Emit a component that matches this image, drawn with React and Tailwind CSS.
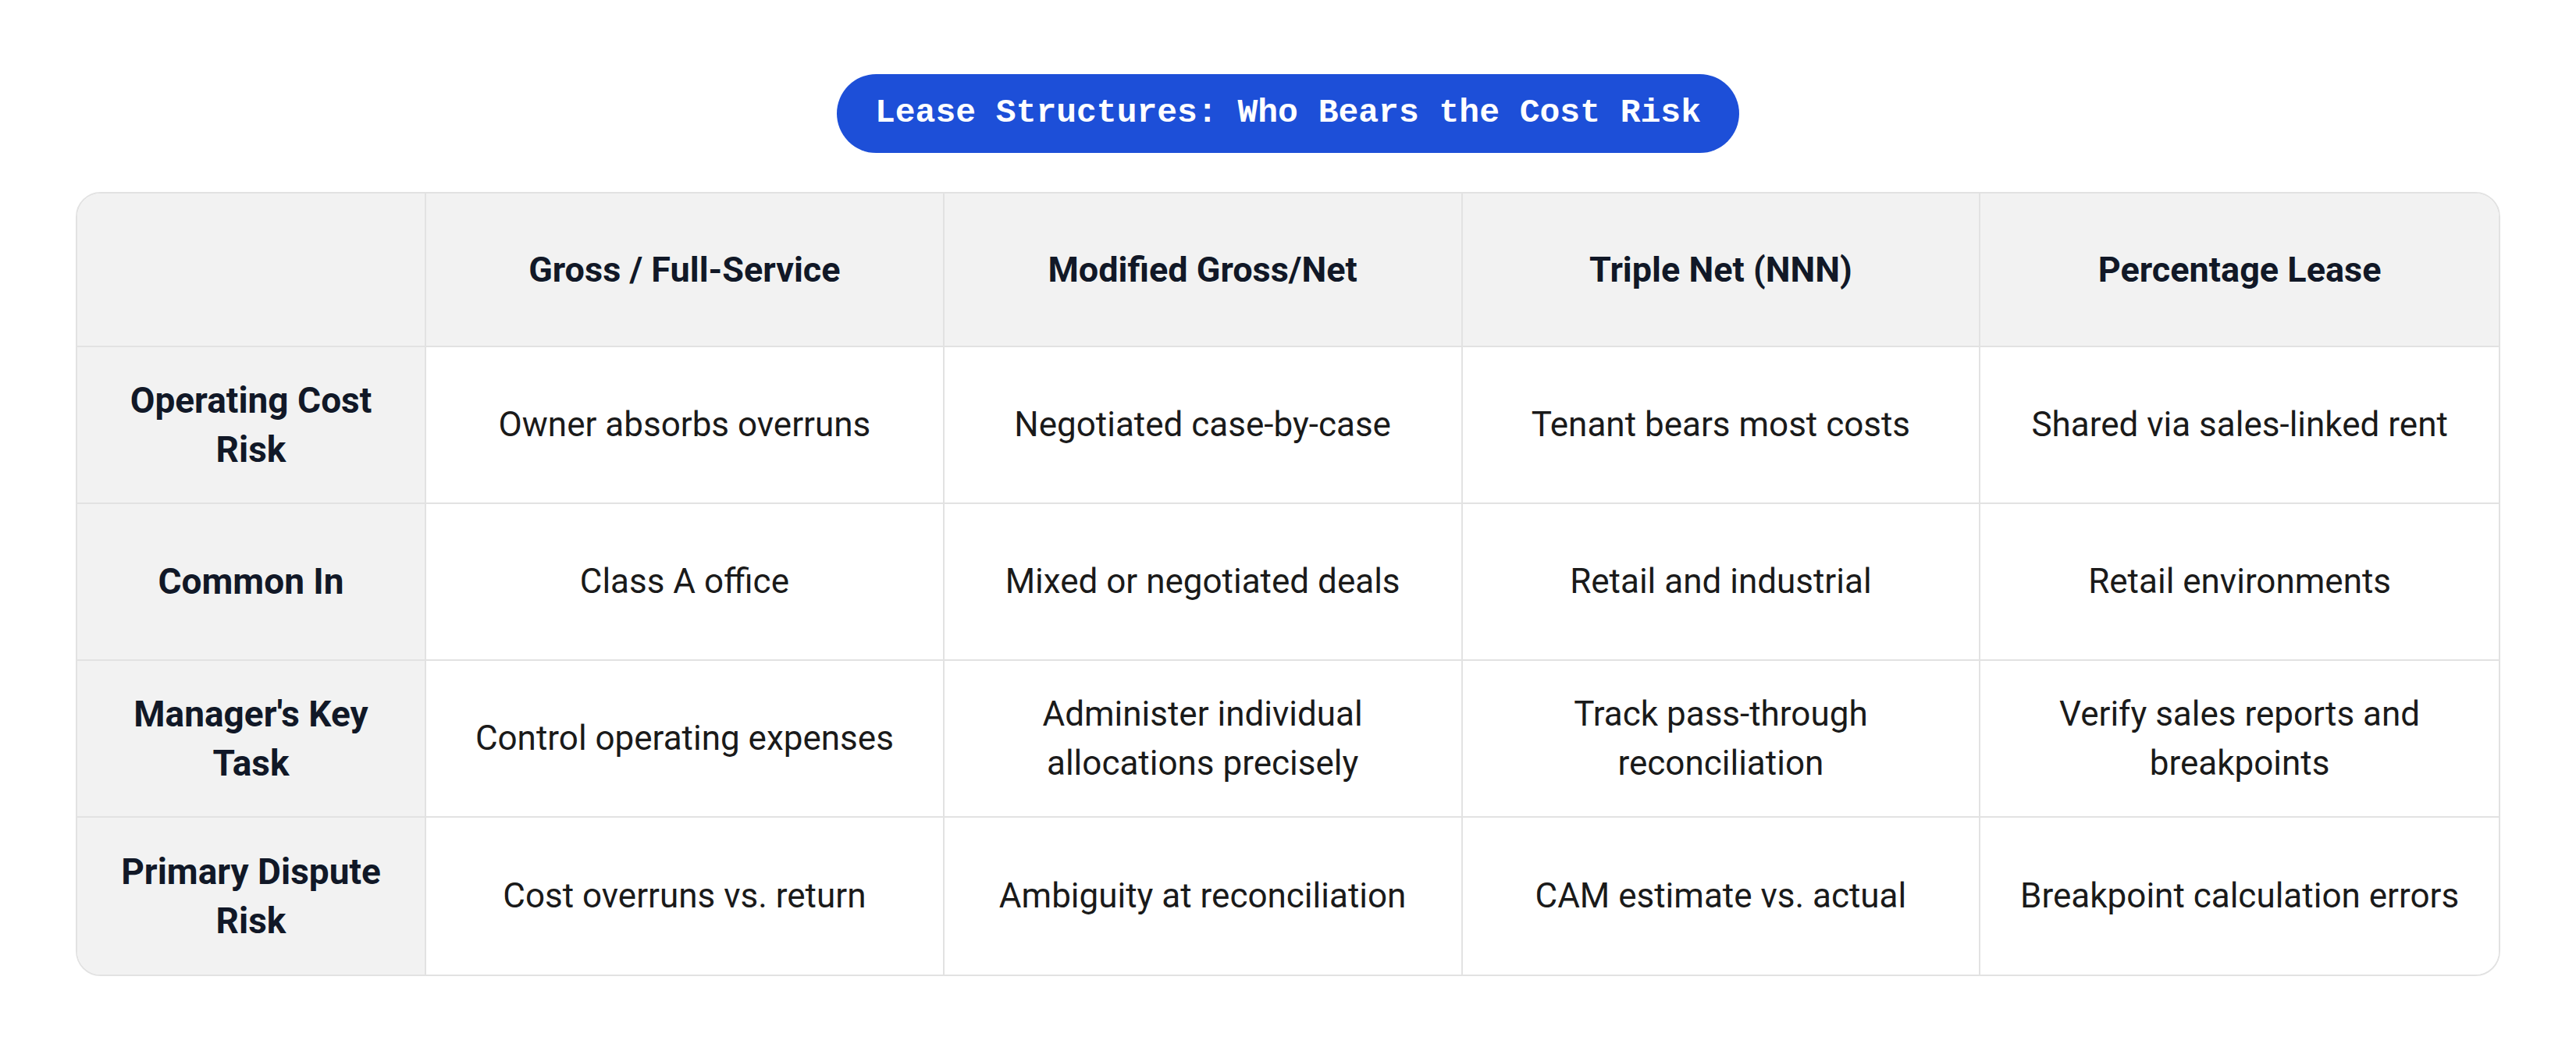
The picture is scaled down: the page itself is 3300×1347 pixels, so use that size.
import React from "react";

const headers = ["Gross / Full-Service", "Modified Gross/Net", "Triple Net (NNN)", "Percentage Lease"];
const rows = [
  ["Operating Cost Risk", ["Owner absorbs overruns", "Negotiated case-by-case", "Tenant bears most costs", "Shared via sales-linked rent"]],
  ["Common In", ["Class A office", "Mixed or negotiated deals", "Retail and industrial", "Retail environments"]],
  ["Manager's Key Task", ["Control operating expenses", "Administer individual allocations precisely", "Track pass-through reconciliation", "Verify sales reports and breakpoints"]],
  ["Primary Dispute Risk", ["Cost overruns vs. return", "Ambiguity at reconciliation", "CAM estimate vs. actual", "Breakpoint calculation errors"]],
];

export default function App() {
  return (
    <div className="w-[3300px] h-[1347px] bg-white flex flex-col items-center pt-[95px] px-[97px]" style={{ fontFamily: "Roboto, 'Liberation Sans', sans-serif" }}>
      <div className="h-[101px] px-[49px] rounded-full bg-[#1d4fd8] flex items-center text-white font-bold text-[43px] whitespace-nowrap" style={{ fontFamily: "'Liberation Mono', 'DejaVu Sans Mono', monospace" }}>
        Lease Structures: Who Bears the Cost Risk
      </div>
      <div className="mt-[50px] w-full border-2 border-[#e2e2e2] rounded-[32px] overflow-hidden grid grid-cols-[447px_1fr_1fr_1fr_1fr]">
        <div className="h-[197px] bg-[#f2f2f2] border-r-2 border-b-2 border-[#e2e2e2]"></div>
        {headers.map((h, i) => (
          <div key={h} className={`h-[197px] bg-[#f2f2f2] border-b-2 border-[#e2e2e2] flex items-center justify-center text-center font-bold text-[45px] text-[#111827] ${i < 3 ? "border-r-2" : ""}`}>
            {h}
          </div>
        ))}
        {rows.map(([label, cells], r) => (
          <React.Fragment key={label}>
            <div className={`h-[201px] bg-[#f2f2f2] border-r-2 border-[#e2e2e2] flex items-center justify-center text-center font-bold text-[46px] leading-[63px] text-[#111827] px-[46px] ${r < 3 ? "border-b-2" : ""}`}>
              {label}
            </div>
            {cells.map((c, i) => (
              <div key={i} className={`h-[201px] bg-white border-[#e2e2e2] flex items-center justify-center text-center text-[44px] leading-[63px] text-[#1a1a1a] px-[24px] ${i < 3 ? "border-r-2" : ""} ${r < 3 ? "border-b-2" : ""}`}>
                {c}
              </div>
            ))}
          </React.Fragment>
        ))}
      </div>
    </div>
  );
}
